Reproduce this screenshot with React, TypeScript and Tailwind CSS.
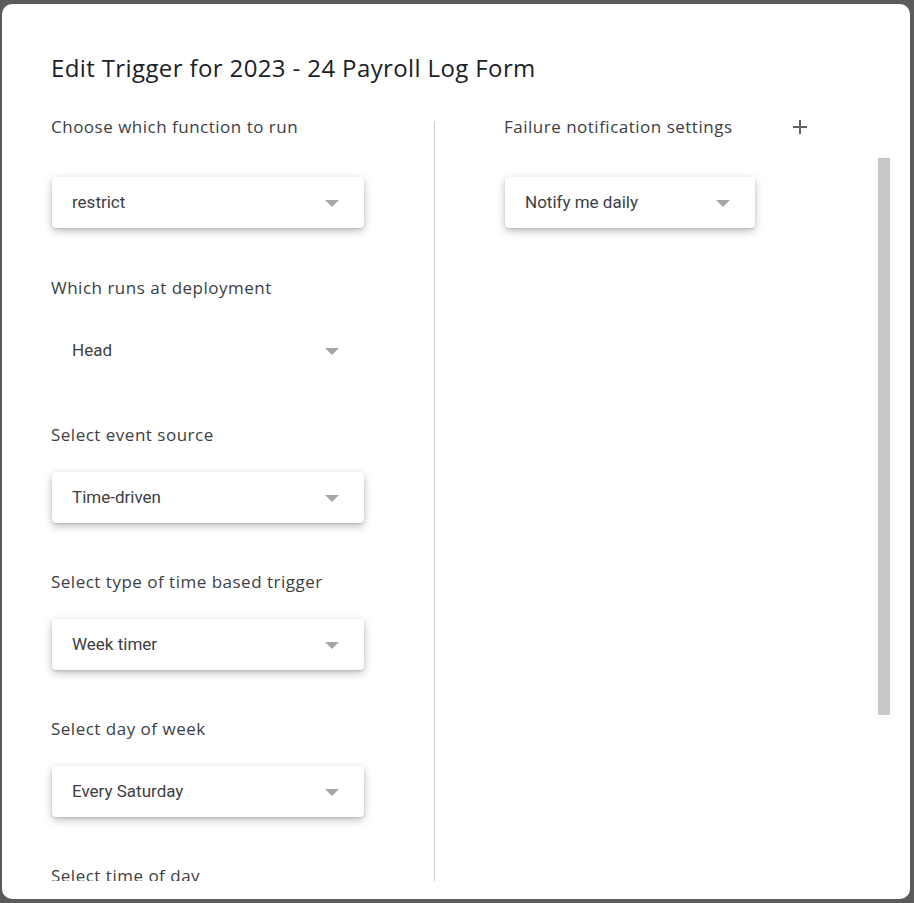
import React from 'react';

interface SelectBoxProps {
  value: string;
  width?: string;
  flat?: boolean;
}

const SelectBox: React.FC<SelectBoxProps> = ({ value, width = 'w-[312px]', flat }) => {
  return (
    <div
      className={`${width} h-[51px] rounded-[4px] bg-white flex items-center justify-between pl-5 pr-[25px] ${
        flat ? '' : 'shadow-[0_3px_8px_rgba(0,0,0,0.26),0_1px_2px_rgba(0,0,0,0.12)]'
      }`}
    >
      <span className="text-[17px] text-[#3c4043] font-['Roboto',sans-serif]">{value}</span>
      <svg width="14" height="7" viewBox="0 0 14 7" className="mt-[1px]">
        <path d="M0 0 L14 0 L7 7 Z" fill="#a6a6a6" />
      </svg>
    </div>
  );
};

const Label: React.FC<{ children: React.ReactNode }> = ({ children }) => (
  <div className="h-[20px] leading-[20px] text-[17px] tracking-[0.5px] text-[#3c4043] whitespace-nowrap">
    {children}
  </div>
);

const Field: React.FC<{ label: string; value: string; flat?: boolean }> = ({ label, value, flat }) => (
  <div className="flex flex-col">
    <Label>{label}</Label>
    <div className="mt-[27px] mb-[49px] ml-[1px]">
      <SelectBox value={value} flat={flat} />
    </div>
  </div>
);

export default function App() {
  return (
    <div className="w-[914px] h-[903px] overflow-hidden bg-[#5b5b5b] pt-[4px] pl-[2px] font-['Open_Sans',sans-serif]">
      <div className="w-[908px] h-[895px] rounded-[10px] bg-white flex flex-col overflow-hidden">
        <div className="h-[111px] pt-[48px] pl-[49px]">
          <h1 className="text-[24px] leading-[32px] tracking-[0.38px] text-[#202124] whitespace-nowrap">
            Edit Trigger for 2023 - 24 Payroll Log Form
          </h1>
        </div>

        <div className="flex h-[766px] pt-[2px] overflow-hidden">
          {/* left column */}
          <div className="w-[432px] pl-[49px] shrink-0">
            <div className="flex flex-col">
              <Label>Choose which function to run</Label>
              <div className="mt-[40px] mb-[50px] ml-[1px]">
                <SelectBox value="restrict" />
              </div>
            </div>
            <Field label="Which runs at deployment" value="Head" flat />
            <Field label="Select event source" value="Time-driven" />
            <Field label="Select type of time based trigger" value="Week timer" />
            <Field label="Select day of week" value="Every Saturday" />
            <Label>Select time of day</Label>
          </div>

          <div className="w-px bg-[#c8cad0] mt-[4px]" />

          {/* right column */}
          <div className="flex-1 pl-[69px] flex flex-col">
            <div className="w-[308px] h-[20px] flex items-center justify-between">
              <Label>Failure notification settings</Label>
              <svg width="24" height="24" viewBox="0 0 24 24">
                <path d="M12 5v14M5 12h14" stroke="#5f6368" strokeWidth="2" />
              </svg>
            </div>
            <div className="mt-[40px] ml-[1px]">
              <SelectBox value="Notify me daily" width="w-[250px]" />
            </div>
          </div>

          {/* scrollbar */}
          <div className="w-[12px] h-[557px] mt-[41px] mr-[20px] bg-[#c9c9c9] border-t border-[#bdbdbd]" />
        </div>
      </div>
    </div>
  );
}
